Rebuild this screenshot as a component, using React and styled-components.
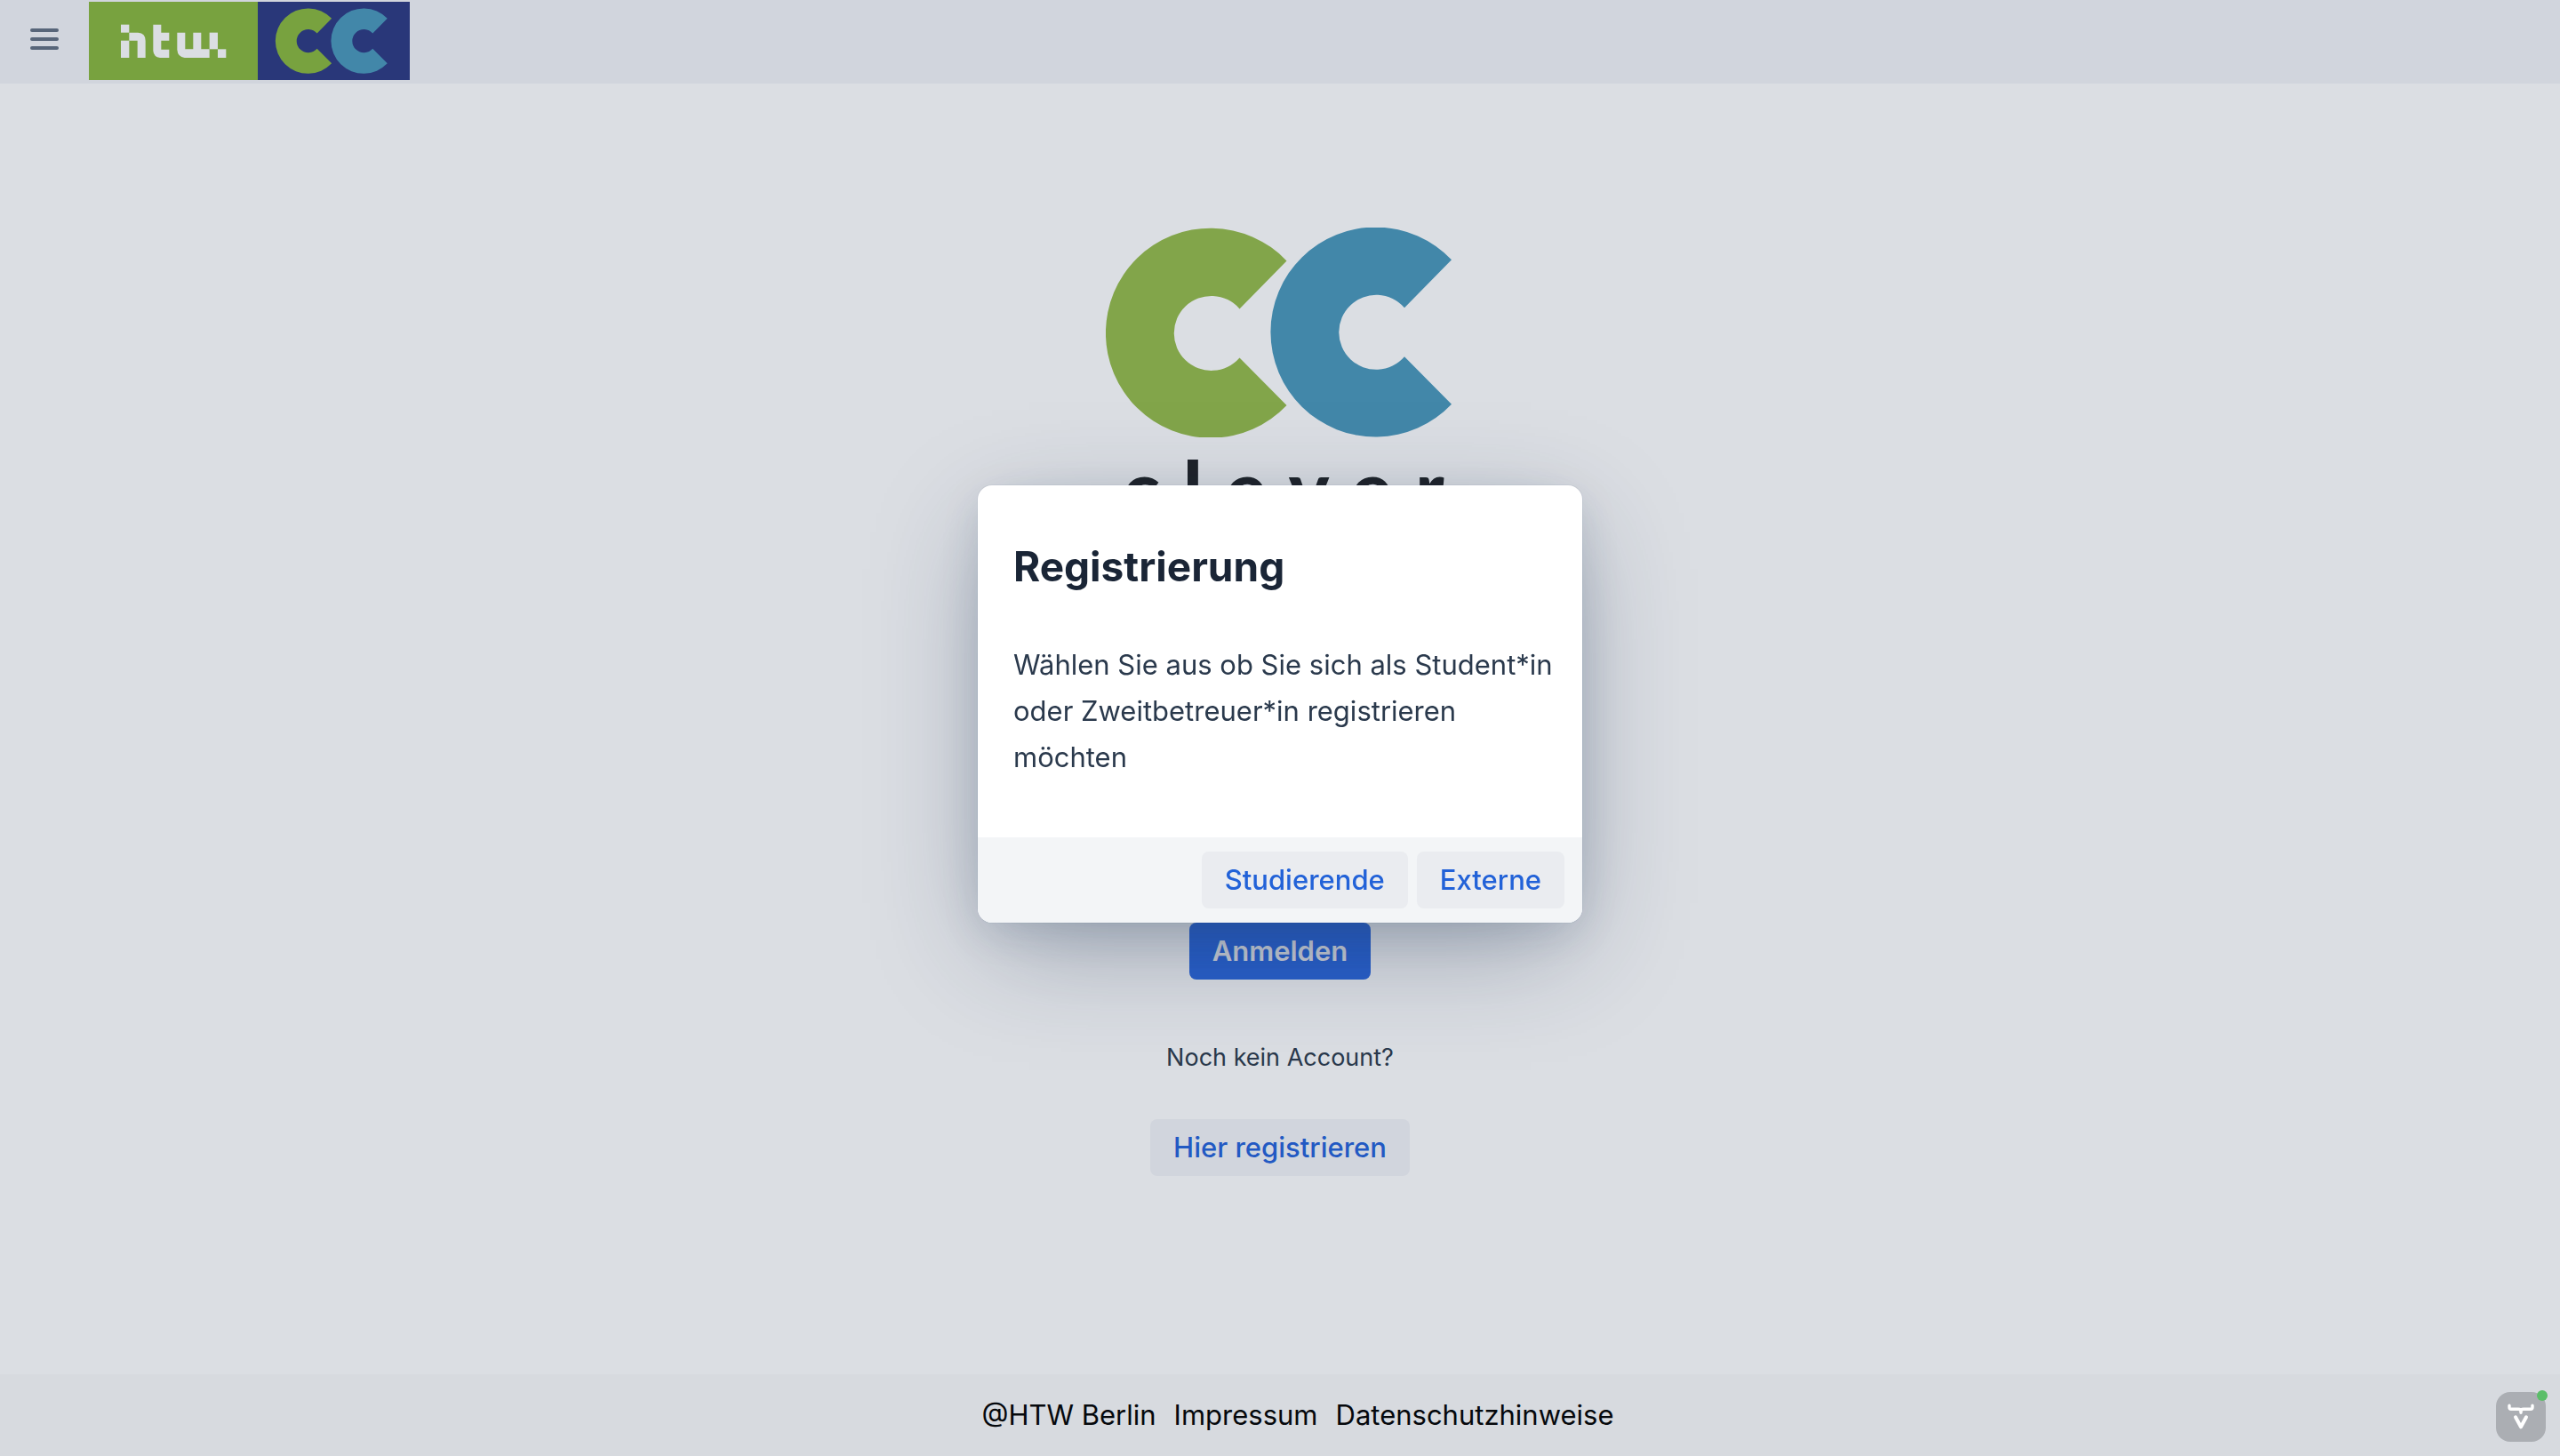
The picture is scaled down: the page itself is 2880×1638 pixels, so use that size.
import React from 'react';
import styled, { createGlobalStyle } from 'styled-components';

const GlobalStyle = createGlobalStyle`
  *, *::before, *::after { box-sizing: border-box; }
  body {
    margin: 0;
    background: #dbdee3;
    color: #2a394c;
    font-family: Inter, "Liberation Sans", sans-serif;
    font-size: 31px;
    line-height: 52px;
  }
  h2, p { margin: 0; }
`;

const Page = styled.div`
  display: flex;
  flex-direction: column;
  min-height: 100vh;
`;

const Header = styled.header`
  display: flex;
  align-items: flex-start;
  padding: 2px 0 4px;
  background: #d1d5dd;
`;

const MenuToggle = styled.button`
  display: flex;
  align-items: center;
  justify-content: center;
  width: 100px;
  height: 84px;
  padding: 0;
  border: 0;
  background: transparent;
  color: #576579;
`;

const HomeLink = styled.a`
  display: flex;
`;

const Main = styled.main`
  flex: 1;
  display: flex;
  flex-direction: column;
  align-items: center;
  padding-top: 162px;
`;

const Brand = styled.div`
  display: flex;
  flex-direction: column;
  align-items: center;
  min-height: 782px;
`;

const Wordmark = styled.div`
  margin-top: 6px;
  padding-left: 34px;
  color: #1f2329;
  font-family: Lato, sans-serif;
  font-size: 86px;
  font-weight: 900;
  line-height: 100px;
  letter-spacing: 26px;
`;

const buttonLook = {
  primary: { bg: '#285fca', fg: '#ccd0d8', weight: 600 },
  secondary: { bg: '#d1d5dd', fg: '#2259c3', weight: 500 },
  dialog: { bg: '#eaecf0', fg: '#2262d8', weight: 500 },
};

const Button = styled.button`
  height: 64px;
  padding: 0 26px;
  border: 0;
  border-radius: 8px;
  background: ${(p) => buttonLook[p.$look].bg};
  color: ${(p) => buttonLook[p.$look].fg};
  font: inherit;
  font-weight: ${(p) => buttonLook[p.$look].weight};
  white-space: nowrap;
`;

const Hint = styled.p`
  margin: 65px 0 46px;
  font-size: 27px;
  line-height: 46px;
`;

const Footer = styled.footer`
  display: flex;
  justify-content: center;
  gap: 20px;
  padding: 20px 0 20px 40px;
  background: #d7dadf;
  color: #05080c;
`;

const FooterLink = styled.a`
  color: inherit;
  text-decoration: none;
`;

const Overlay = styled.div`
  position: fixed;
  inset: 0;
  display: flex;
  align-items: center;
  justify-content: center;
  padding-bottom: 54px;
`;

const Dialog = styled.section`
  width: 680px;
  border-radius: 16px;
  overflow: hidden;
  background: #fff;
  box-shadow:
    0 0 0 1px rgba(25, 58, 103, 0.05),
    0 12px 48px -6px rgba(28, 53, 90, 0.16),
    0 36px 120px -16px rgba(28, 48, 78, 0.38);
`;

const DialogBody = styled.div`
  display: flex;
  flex-direction: column;
  gap: 56px;
  padding: 62px 32px 64px 40px;
`;

const DialogTitle = styled.h2`
  color: #1a2536;
  font-size: 46px;
  font-weight: 700;
  line-height: 58px;
`;

const DialogActions = styled.div`
  display: flex;
  justify-content: flex-end;
  gap: 10px;
  padding: 16px 20px;
  background: #f3f5f7;
`;

const DevTools = styled.button`
  position: fixed;
  right: 16px;
  bottom: 16px;
  display: flex;
  width: 56px;
  height: 56px;
  padding: 0;
  border: 0;
  border-radius: 16px;
  background: #abaeb3;
`;

const StatusDot = styled.span`
  position: absolute;
  top: -2px;
  right: -2px;
  width: 12px;
  height: 12px;
  border-radius: 50%;
  background: #5bbe69;
`;

const ringPath =
  'M85 -81 A118 118 0 1 0 85 81.5 L32 28 A42 42 0 1 1 32 -27 Z';

function MenuIcon() {
  return (
    <svg width="32" height="24" viewBox="0 0 32 24" fill="currentColor" aria-hidden="true">
      <rect width="32" height="4" rx="2" />
      <rect y="10" width="32" height="4" rx="2" />
      <rect y="20" width="32" height="4" rx="2" />
    </svg>
  );
}

function HeaderLogo() {
  return (
    <svg width="361" height="88" viewBox="0 0 361 88" role="img" aria-label="HTW CC">
      <rect width="190" height="88" fill="#78a23f" />
      <rect x="190" width="171" height="88" fill="#293779" />
      <g transform="translate(20 13) scale(0.3333)" fill="#dbdee3">
        <rect x="48" y="38" width="28" height="27" />
        <rect x="48" y="92" width="28" height="58" />
        <path d="M76 65 H106 Q131 67 131 92 V150 H104 V92 H76 Z" />
        <path d="M157 38 H184 V65 H211 V92 H184 V122 H211 V150 H180 Q159 148 157 127 Z" />
        <path d="M238 65 H265 V121 H292 V65 H319 V121 H347 V150 H263 Q240 147 238 123 Z" />
        <rect x="347" y="65" width="28" height="56" />
        <rect x="375" y="121" width="28" height="29" />
      </g>
      <path d={ringPath} transform="translate(246.7 44) scale(0.311)" fill="#78a23f" />
      <path d={ringPath} transform="translate(309.3 44) scale(0.311)" fill="#4287a9" />
    </svg>
  );
}

function BrandMark() {
  return (
    <svg width="392" height="236" viewBox="0 0 392 236" aria-hidden="true">
      <path d={ringPath} transform="translate(118.5 118.4)" fill="#82a54a" />
      <path d={ringPath} transform="translate(304 117.3)" fill="#4287a9" />
    </svg>
  );
}

function VaadinIcon() {
  return (
    <svg
      width="56"
      height="56"
      viewBox="0 0 56 56"
      fill="none"
      stroke="#fff"
      strokeLinecap="round"
      strokeLinejoin="round"
      aria-hidden="true"
    >
      <path
        d="M15 15.3 V17.3 Q15 19.3 17 19.3 H25 Q28 19.3 28 22 V23.3 M28 22 Q28 19.3 31 19.3 H39 Q41 19.3 41 17.3 V15.3"
        strokeWidth="3.4"
      />
      <path d="M22 28.3 L28 39.3 L34 28.3" strokeWidth="4" />
    </svg>
  );
}

export default function App() {
  return (
    <>
      <GlobalStyle />
      <Page>
        <Header>
          <MenuToggle type="button" aria-label="Menü">
            <MenuIcon />
          </MenuToggle>
          <HomeLink href="#">
            <HeaderLogo />
          </HomeLink>
        </Header>
        <Main>
          <Brand>
            <BrandMark />
            <Wordmark>clever</Wordmark>
          </Brand>
          <Button type="button" $look="primary">Anmelden</Button>
          <Hint>Noch kein Account?</Hint>
          <Button type="button" $look="secondary">Hier registrieren</Button>
        </Main>
        <Footer>
          <span>@HTW Berlin</span>
          <FooterLink href="#impressum">Impressum</FooterLink>
          <FooterLink href="#datenschutz">Datenschutzhinweise</FooterLink>
        </Footer>
      </Page>
      <Overlay>
        <Dialog role="dialog" aria-modal="true" aria-labelledby="dialog-title">
          <DialogBody>
            <DialogTitle id="dialog-title">Registrierung</DialogTitle>
            <p>
              Wählen Sie aus ob Sie sich als Student*in oder Zweitbetreuer*in
              registrieren möchten
            </p>
          </DialogBody>
          <DialogActions>
            <Button type="button" $look="dialog">Studierende</Button>
            <Button type="button" $look="dialog">Externe</Button>
          </DialogActions>
        </Dialog>
      </Overlay>
      <DevTools type="button" aria-label="Vaadin">
        <VaadinIcon />
        <StatusDot />
      </DevTools>
    </>
  );
}
